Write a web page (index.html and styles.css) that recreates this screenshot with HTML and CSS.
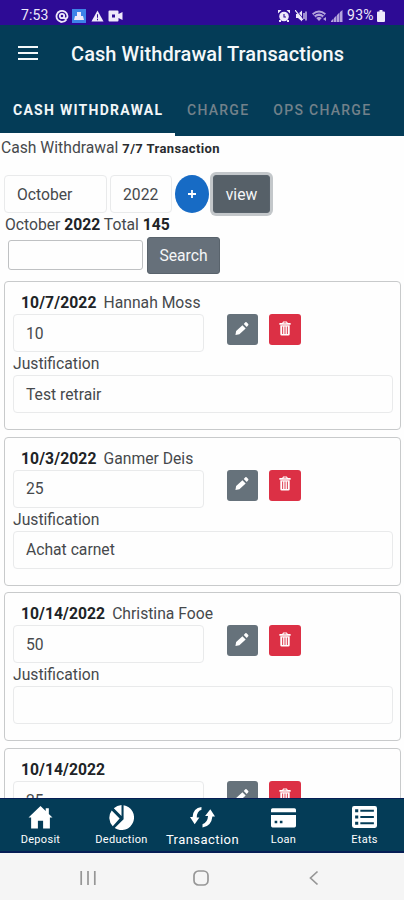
FILE: index.html
```
<!DOCTYPE html>
<html lang="en">
<head>
<meta charset="utf-8">
<title>Cash Withdrawal Transactions</title>
<link rel="stylesheet" href="styles.css">
</head>
<body>
<svg width="0" height="0" class="defs">
  <symbol id="pencil" viewBox="0 0 16 16"><path d="M.5 15.500l.8-4.700 7.200-6.600 3.700 3.700-7.200 6.800zM10 2.800l1.800-1.900q.7-.5 1.400 0l1.900 1.900q.6.700 0 1.400L13.400 6.200z"/></symbol>
  <symbol id="trash" viewBox="0 0 14 16"><path fill-rule="evenodd" d="M1 2.200h3L5 .5h4l1 1.700h3V4H1zM5.300 2.500h3.400l-.5-.8H5.800zM2 4.600h10v9.400q0 1.500-1.500 1.500h-7Q2 15.500 2 14zM4 5.800v8h1v-8zm2.500 0v8h1v-8zm2.500 0v8h1v-8z"/></symbol>
</svg>
<div class="status">
  <span class="clock">7:53</span>
  <svg class="s-at" viewBox="0 0 14 14"><path class="ring" d="M11.500 10.500A5.500 5.500 0 1 1 12.500 7q0 2.500-2 2.500T8.800 8"/><circle class="ring" cx="7" cy="7" r="2.200"/><path d="M6 14l-3-3 5 1.500z"/></svg>
  <svg class="s-app" viewBox="0 0 14 14"><rect class="blue" width="14" height="14"/><path d="M5 3h4v4h2l1 4H2l1-4h2z"/></svg>
  <svg class="s-warn" viewBox="0 0 14 12"><path d="M7 0l6.500 12H.5z"/><path class="cut" d="M7 4v4M7 9v1.500"/></svg>
  <svg class="s-cam" viewBox="0 0 15 12"><path d="M1.500.5h8q1 0 1 1v2.500l4-2v8l-4-2v2.500q0 1-1 1h-8q-1 0-1-1v-9q0-1 1-1z"/><path class="hole" d="M4 4.500h3v3H4z"/></svg>
  <span class="grow"></span>
  <svg class="s-alarm" viewBox="0 0 12 12"><circle cx="6" cy="6.500" r="4.800"/><path d="M0 0h3.500L0 3.500zM12 0H8.500L12 3.500zM1 10h2v2H1zM9 10h2v2H9z"/><path class="cut" d="M6 4v3h2"/></svg>
  <svg class="s-mute" viewBox="0 0 12 12"><path d="M1 4h2l4-3.500v11L3 8H1z"/><path class="cut" d="M1.500.5l7 9"/><path class="line" d="M0 0l8 10M9 3v6M11 1.500v9"/></svg>
  <svg class="s-wifi" viewBox="0 0 16 12"><path d="M0 3.500Q7-2.500 14 3.500L7 11z"/><path class="cut" d="M2 5q5-4 10 0M4 7.500q3-2 6 0"/><path d="M11 9l3-2v4z"/></svg>
  <svg class="s-sig" viewBox="0 0 12 12"><path d="M0 12h2.500V8.500L0 11zM3 12h2.500V5.500L3 8zM6 12h2.500V2.500L6 5zM9 12h2.500V0L9 2z"/></svg>
  <span class="pct">93%</span>
  <svg class="s-bat" viewBox="0 0 8 12"><path d="M2.500 0h3v1.500H7q1 0 1 1V11q0 1-1 1H1q-1 0-1-1V2.500q0-1 1-1h1.500z"/></svg>
</div>
<header class="appbar">
  <svg class="menu" viewBox="0 0 20 14"><path d="M0 1.100h20M0 7h20M0 12.900h20"/></svg>
  <h1>Cash Withdrawal Transactions</h1>
</header>
<nav class="tabs">
  <span class="tab active"><b>CASH WITHDRAWAL</b></span>
  <span class="tab"><b>CHARGE</b></span>
  <span class="tab"><b>OPS CHARGE</b></span>
</nav>
<main>
  <p class="summary">Cash Withdrawal <b>7/7 Transaction</b></p>
  <div class="filters">
    <div class="field month">October</div>
    <div class="field year">2022</div>
    <div class="plus"><svg viewBox="0 0 8 8"><path d="M4 0v8M0 4h8"/></svg></div>
    <div class="btn view">view</div>
  </div>
  <p class="total">October <b>2022</b> Total <b>145</b></p>
  <div class="search"><div class="query"></div><div class="btn go">Search</div></div>
  <section class="cards">
    <article class="card">
      <p class="who"><b>10/7/2022</b><span>Hannah Moss</span></p>
      <div class="row"><div class="field amount">10</div><div class="act edit"><svg><use href="#pencil"/></svg></div><div class="act del"><svg><use href="#trash"/></svg></div></div>
      <p class="label">Justification</p>
      <div class="field note">Test retrair</div>
    </article>
    <article class="card">
      <p class="who"><b>10/3/2022</b><span>Ganmer Deis</span></p>
      <div class="row"><div class="field amount">25</div><div class="act edit"><svg><use href="#pencil"/></svg></div><div class="act del"><svg><use href="#trash"/></svg></div></div>
      <p class="label">Justification</p>
      <div class="field note">Achat carnet</div>
    </article>
    <article class="card">
      <p class="who long"><b>10/14/2022</b><span>Christina Fooe</span></p>
      <div class="row"><div class="field amount">50</div><div class="act edit"><svg><use href="#pencil"/></svg></div><div class="act del"><svg><use href="#trash"/></svg></div></div>
      <p class="label">Justification</p>
      <div class="field note"></div>
    </article>
    <article class="card">
      <p class="who long"><b>10/14/2022</b></p>
      <div class="row"><div class="field amount">25</div><div class="act edit"><svg><use href="#pencil"/></svg></div><div class="act del"><svg><use href="#trash"/></svg></div></div>
    </article>
  </section>
</main>
<nav class="bottom">
  <div class="item"><svg viewBox="0 0 24 24"><path d="M12 1L.5 12H3v10.500h6.500V15h5v7.500H21V12h2.500L20 8.600V3h-3v2.700z"/></svg><span>Deposit</span></div>
  <div class="item"><svg viewBox="0 0 24 24"><path d="M14 .2A12 12 0 1 1 5.500 22.100L14 13.600zM12 0v10.500L4.600 3A12 12 0 0 1 12 0zM2.600 5.200l7.600 7.700-6.600 7.600A12 12 0 0 1 2.600 5.200z"/></svg><span>Deduction</span></div>
  <div class="item on"><svg viewBox="0 0 24 24"><path d="M11 2Q3 3 2.500 11.500H0L4.500 18.500 9 12H6.500Q6.500 6 11 4.500zM12 21.500Q20.500 20.500 21.500 11H24L19.500 4 14.500 10.500H17.300Q17 16.500 12 18.500z"/></svg><span>Transaction</span></div>
  <div class="item"><svg viewBox="0 0 24 24"><path fill-rule="evenodd" d="M1.500 3h21q1.500 0 1.500 1.500V7H0V4.500Q0 3 1.500 3zM0 9.500h24V20q0 1.500-1.500 1.500h-21Q0 21.500 0 20zM3.500 15v2.500H6V15zm5 0v2.500H11V15z"/></svg><span>Loan</span></div>
  <div class="item"><svg viewBox="0 0 24 24"><path fill-rule="evenodd" d="M2 1h20q2 0 2 2v17q0 2-2 2H2q-2 0-2-2V3q0-2 2-2zM3 4v3h3V4zm5 .5v2h13v-2zM3 10v3h3v-3zm5 .5v2h13v-2zM3 16v3h3v-3zm5 .5v2h13v-2z"/></svg><span>Etats</span></div>
</nav>
<footer class="system">
  <svg viewBox="0 0 16 16"><path d="M1.200 1v14M8 1v14M14.800 1v14"/></svg>
  <svg viewBox="0 0 16 16"><rect x="1" y="1" width="14" height="14" rx="4.500"/></svg>
  <svg viewBox="0 0 16 16"><path d="M11.500 1.500L4.500 8l7 6.500"/></svg>
</footer>
</body>
</html>
```
FILE: styles.css
```
* { box-sizing: border-box; }
body {
  margin: 0;
  width: 404px;
  height: 900px;
  display: flex;
  flex-direction: column;
  overflow: hidden;
  background: #fefefe;
  color: #46494c;
  font-family: Roboto, "Noto Sans", sans-serif;
  font-size: 15.700px;
}
p, h1 { margin: 0; }
svg { flex: none; display: block; fill: currentColor; }
.defs { position: absolute; }

.status {
  height: 25px;
  flex: none;
  display: flex;
  align-items: center;
  padding: 6px 19px 0 21px;
  background: #2d0b95;
  color: #eee9fa;
}
.clock { width: 34px; font-size: 14px; line-height: 19px; letter-spacing: .1px; }
.grow { flex: 1; }
.hole { fill: #2d0b95; }
.ring { fill: none; stroke: currentColor; stroke-width: 1.8; }
.blue { fill: #3d83e8; }
.cut { fill: none; stroke: #2d0b95; stroke-width: 1.1; }
.line { fill: none; stroke: currentColor; stroke-width: 1.2; }
.s-at { width: 14px; height: 14px; margin-right: 3px; }
.s-app { width: 14px; height: 14px; margin-right: 5px; }
.s-warn { width: 13px; height: 12px; margin-right: 4px; }
.s-cam { width: 15px; height: 12px; }
.s-alarm { width: 12px; height: 12px; margin-right: 5px; }
.s-mute { width: 12px; height: 12px; margin-right: 5px; }
.s-wifi { width: 16px; height: 12px; margin-right: 3px; color: #b4a4dc; }
.s-sig { width: 12px; height: 12px; margin-right: 4px; color: #b4a4dc; }
.pct { width: 30px; font-size: 14px; line-height: 19px; letter-spacing: .3px; white-space: nowrap; }
.s-bat { width: 8px; height: 12px; }

.appbar {
  height: 56px;
  flex: none;
  display: flex;
  align-items: center;
  padding: 2px 0 0 18px;
  background: #043c57;
  color: #f4f8fa;
}
.menu { width: 20px; height: 14px; margin: -3px 33px 0 0; stroke: currentColor; stroke-width: 2; }
h1 { font-size: 20px; font-weight: 500; letter-spacing: .08px; white-space: nowrap; }

.tabs {
  height: 55px;
  flex: none;
  display: flex;
  background: #043c57;
  color: #72818a;
}
.tab {
  display: flex;
  align-items: center;
  padding: 2px 12px 0;
  font-size: 14px;
  letter-spacing: 1.270px;
  white-space: nowrap;
}
.tab b { font-weight: 500; }
.tab.active { width: 175px; padding: 5px 12px 0 13px; border-bottom: 3px solid #fff; color: #f1f6f8; }
.tab.active b { font-weight: 700; }

main { flex: 1; min-height: 0; overflow: hidden; }
.summary { height: 37px; line-height: 24px; padding-left: 1px; white-space: nowrap; }
.summary b { font-size: 13px; font-weight: 700; letter-spacing: .38px; color: #292c2f; }
.filters { display: flex; height: 41px; align-items: center; padding: 1px 0 0 4px; }
.field {
  height: 38px;
  display: flex;
  align-items: center;
  padding: 0 12px;
  border: 1px solid #e9eaeb;
  border-radius: 4px;
}
.month { width: 103px; margin-right: 3px; }
.year { width: 62px; margin-right: 3px; }
.plus {
  width: 34px;
  height: 38px;
  margin-right: 4px;
  display: grid;
  place-items: center;
  border-radius: 50%;
  background: #176bc5;
}
.plus svg { width: 8px; height: 8px; stroke: #fff; stroke-width: 1.8; }
.btn {
  display: grid;
  place-items: center;
  color: #f4f6f7;
  background: #66707a;
  border: 1px solid #59636c;
  border-radius: 3px;
}
.view { width: 57px; height: 38px; background: #566068; box-shadow: 0 0 0 3px #c3c7ca; }
.total { height: 23px; line-height: 22px; padding-left: 5px; white-space: nowrap; }
.total b, .who b { font-weight: 700; color: #202326; }
.search { display: flex; padding-left: 8px; align-items: center; height: 37px; }
.query { width: 135px; height: 30px; margin: -2px 4px 0 0; border: 1px solid #bfc1c3; border-radius: 3px; }
.go { width: 73px; height: 37px; }

.cards { padding: 7px 3px 0 4px; display: flex; flex-direction: column; gap: 6.700px; }
.card {
  height: 149px;
  flex: none;
  padding: 8px 8px 0;
  border: 1px solid #c8cacb;
  border-radius: 4px;
}
.who { height: 24px; line-height: 25px; padding-left: 8px; white-space: nowrap; }
.who b { letter-spacing: .1px; }
.who.long b { letter-spacing: .05px; }
.who span { margin-left: 7px; }
.row { display: flex; height: 38px; }
.amount { width: 191px; margin-right: 22.500px; }
.act {
  width: 31px;
  height: 31px;
  display: grid;
  place-items: center;
  border-radius: 3px;
  color: #fff;
}
.edit { margin-right: 11.500px; background: #66727b; }
.del { width: 32px; background: #dc3045; }
.act svg { width: 14px; height: 15px; margin-top: -3px; }
.label { height: 23px; line-height: 23px; }
.note { width: 380px; }

.bottom {
  height: 55px;
  flex: none;
  display: flex;
  background: #043c57;
  border-top: 1px solid #051e55;
  border-bottom: 2px solid #051e55;
  color: #fff;
}
.item {
  width: 81px;
  display: flex;
  flex-direction: column;
  align-items: center;
  padding-top: 6px;
  font-size: 11px;
  flex: none;
}
.item svg { width: 25px; height: 25px; }
.item span { line-height: 15px; margin-top: 2px; letter-spacing: .3px; }
.item.on span { font-size: 13px; letter-spacing: .45px; }

.system {
  height: 47px;
  flex: none;
  display: flex;
  justify-content: space-between;
  align-items: center;
  padding: 2px 82px 0 80px;
  background: #f5f5f5;
}
.system svg { width: 16px; height: 16px; fill: none; stroke: #969696; stroke-width: 1.700; }
```
